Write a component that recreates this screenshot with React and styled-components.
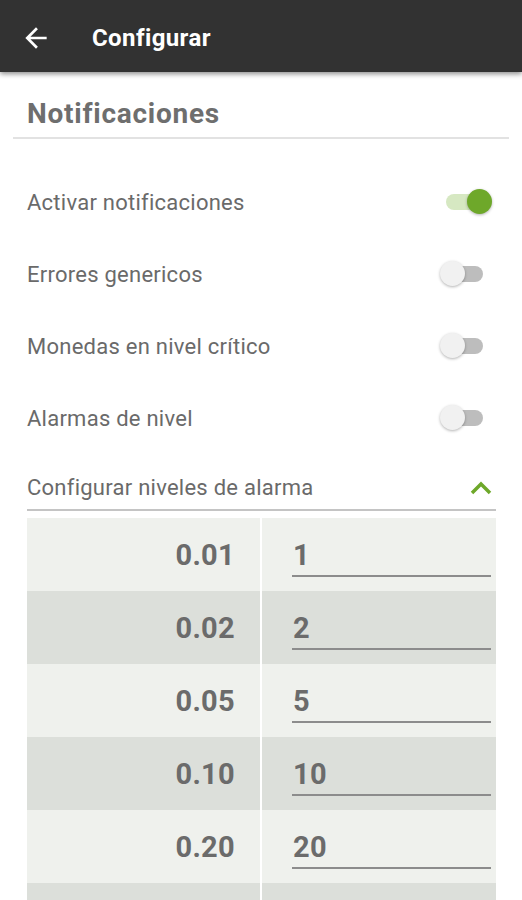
import React from "react";
import styled, { createGlobalStyle } from "styled-components";

const Global = createGlobalStyle`
  html, body { margin: 0; padding: 0; background: #ffffff; }
  body { font-family: Roboto, "Noto Sans", Arial, sans-serif; -webkit-font-smoothing: antialiased; }
  * { box-sizing: border-box; }
`;

const Screen = styled.div`
  width: 522px;
  height: 900px;
  overflow: hidden;
  background: #fff;
  display: flex;
  flex-direction: column;
`;

const AppBar = styled.header`
  height: 72px;
  flex: none;
  background: #323232;
  display: flex;
  align-items: center;
  padding: 4px 0 0 20px;
  box-shadow: 0 2px 5px rgba(0, 0, 0, 0.45);
  position: relative;
  z-index: 1;
`;

const Title = styled.h1`
  margin: 0 0 0 40px;
  color: #ffffff;
  font-size: 24px;
  font-weight: 700;
  letter-spacing: 0.4px;
`;

const SectionHead = styled.div`
  margin: 0 13px;
  padding: 25px 14px 6px;
  border-bottom: 2px solid #e2e2e2;
  font-size: 28px;
  line-height: 34px;
  font-weight: 700;
  letter-spacing: 0.75px;
  color: #6e6e6e;
`;

const List = styled.div`
  margin: 26px 26px 0 27px;
  display: flex;
  flex-direction: column;
`;

const Row = styled.div`
  height: 72px;
  display: flex;
  align-items: center;
  justify-content: space-between;
  padding-top: 2px;
  font-size: 22px;
  letter-spacing: 0.25px;
  color: #6a6a6a;
`;

const Switch = styled.span`
  position: relative;
  width: 52px;
  height: 26px;
  margin-right: 4px;
  flex: none;

  &::before {
    content: "";
    position: absolute;
    left: 6px;
    top: 5px;
    width: 37px;
    height: 16px;
    border-radius: 8px;
    background: ${(p) => (p.$on ? "#d6e8c2" : "#bdbdbd")};
  }

  &::after {
    content: "";
    position: absolute;
    top: 0;
    left: ${(p) => (p.$on ? "27px" : "0px")};
    width: 25px;
    height: 25px;
    border-radius: 50%;
    background: ${(p) => (p.$on ? "#6ea82a" : "#f1f1f1")};
    box-shadow: 0 1px 3px rgba(0, 0, 0, 0.3);
  }
`;

const ExpandHead = styled.div`
  display: flex;
  align-items: center;
  justify-content: space-between;
  padding: 22px 0 8px;
  border-bottom: 2px solid #c4c4c4;
  font-size: 22px;
  line-height: 26px;
  letter-spacing: 0.25px;
  color: #6a6a6a;
`;

const Table = styled.div`
  margin-top: 7px;
  display: grid;
  grid-template-columns: 233px 234px;
  column-gap: 2px;
  background: #fff;
`;

const Cell = styled.div`
  height: 73px;
  background: ${(p) => (p.$dark ? "#dcdfda" : "#eff1ed")};
`;

const ValueCell = styled(Cell)`
  display: flex;
  align-items: center;
  justify-content: flex-end;
  padding-right: 25px;
  font-size: 29px;
  font-weight: 700;
  letter-spacing: 0.3px;
  color: #6b6b6b;
`;

const InputCell = styled(Cell)`
  display: flex;
  flex-direction: column;
  justify-content: flex-end;
  padding: 0 5px 14px 30px;
`;

const Field = styled.div`
  border-bottom: 2px solid #8c8c8c;
  padding: 0 0 3px 1px;
  font-size: 29px;
  line-height: 34px;
  font-weight: 700;
  letter-spacing: 0.3px;
  color: #6b6b6b;
`;

const Back = () => (
  <svg width="32" height="32" viewBox="0 0 24 24" fill="#fff">
    <path d="M20 11H7.83l5.59-5.59L12 4l-8 8 8 8 1.41-1.41L7.83 13H20v-2z" />
  </svg>
);

const Chevron = () => (
  <svg width="26" height="20" viewBox="0 0 26 20" style={{ marginRight: 2 }}>
    <polyline points="4,15 13,6 22,15" fill="none" stroke="#6ea82a" strokeWidth="3.5" />
  </svg>
);

const settings = [
  ["Activar notificaciones", true],
  ["Errores genericos", false],
  ["Monedas en nivel crítico", false],
  ["Alarmas de nivel", false],
];

const levels = [
  ["0.01", "1"],
  ["0.02", "2"],
  ["0.05", "5"],
  ["0.10", "10"],
  ["0.20", "20"],
  ["0.50", "50"],
];

export default function App() {
  return (
    <Screen>
      <Global />
      <AppBar>
        <Back />
        <Title>Configurar</Title>
      </AppBar>
      <SectionHead>Notificaciones</SectionHead>
      <List>
        {settings.map(([label, on]) => (
          <Row key={label}>
            <span>{label}</span>
            <Switch $on={on} />
          </Row>
        ))}
        <ExpandHead>
          <span>Configurar niveles de alarma</span>
          <Chevron />
        </ExpandHead>
        <Table>
          {levels.map(([v, n], i) => (
            <React.Fragment key={v}>
              <ValueCell $dark={i % 2 === 1}>{v}</ValueCell>
              <InputCell $dark={i % 2 === 1}>
                <Field>{n}</Field>
              </InputCell>
            </React.Fragment>
          ))}
        </Table>
      </List>
    </Screen>
  );
}
